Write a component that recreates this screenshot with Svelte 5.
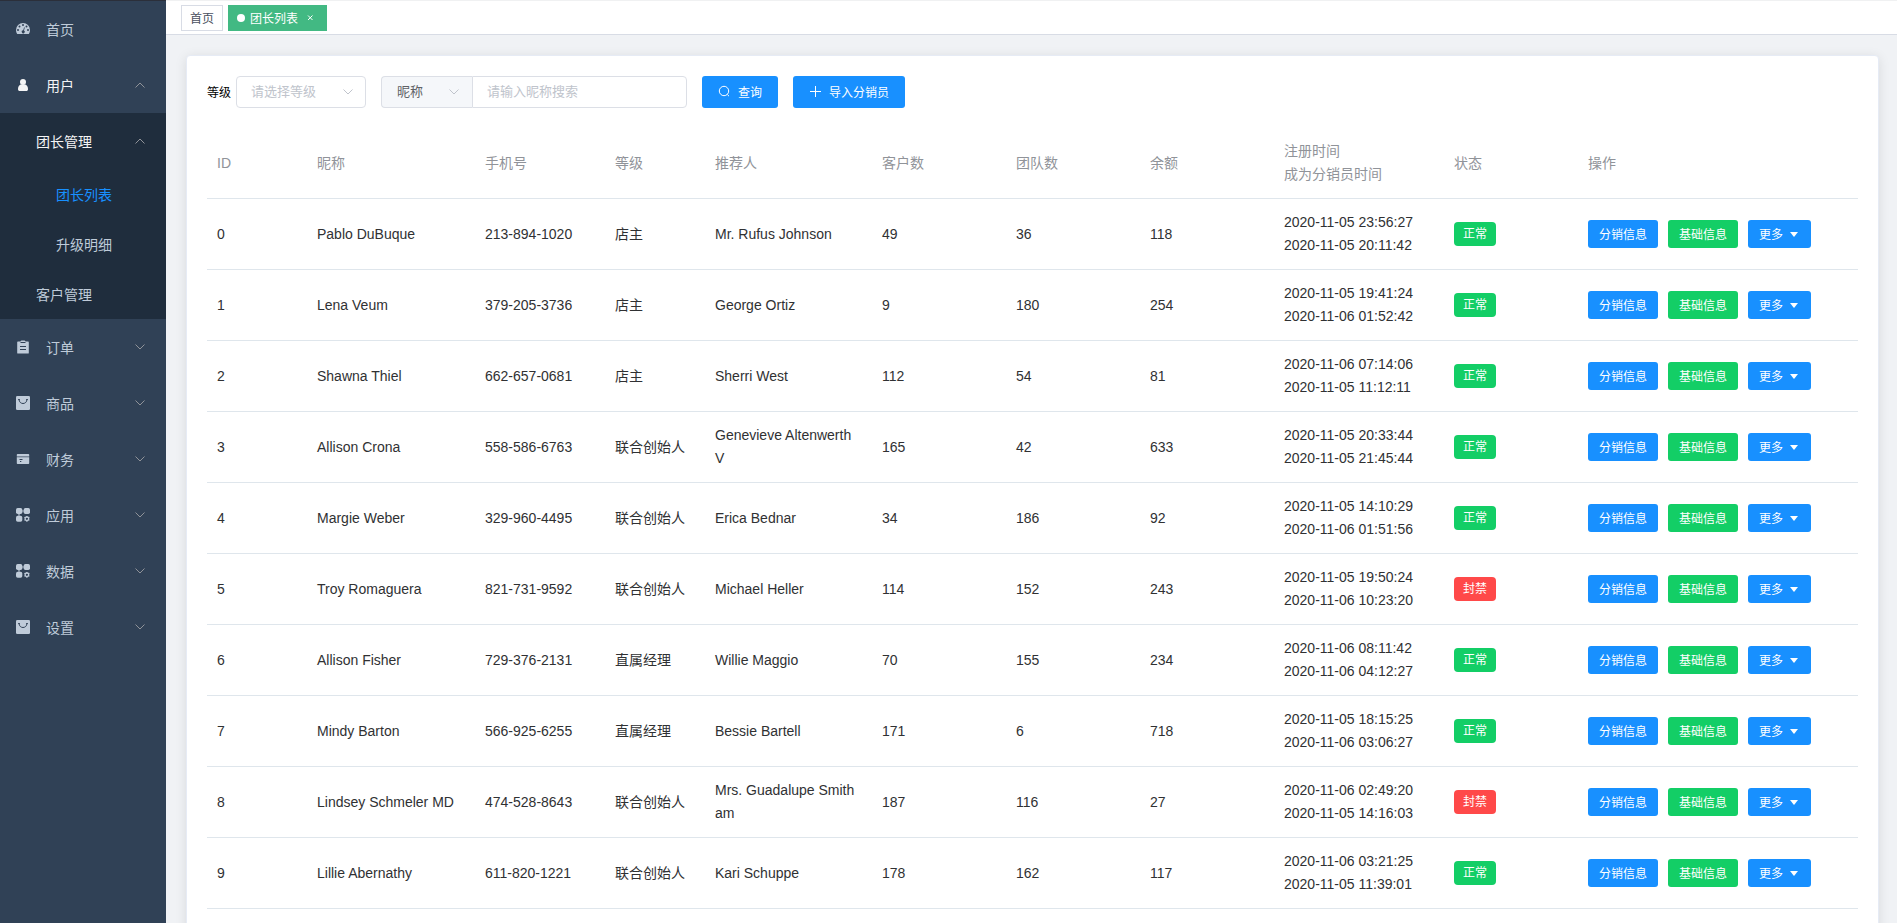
<script>
  const rest = [
    { label: '订单', icon: 'clipboard' },
    { label: '商品', icon: 'bag' },
    { label: '财务', icon: 'card' },
    { label: '应用', icon: 'grid' },
    { label: '数据', icon: 'grid' },
    { label: '设置', icon: 'bag' }
  ];

  const widths = [100, 168, 130, 100, 167, 134, 134, 134, 170, 134, 280];

  const rows = [
    ['Pablo DuBuque', '213-894-1020', '店主', 'Mr. Rufus Johnson', 49, 36, 118, '2020-11-05 23:56:27', '2020-11-05 20:11:42', true],
    ['Lena Veum', '379-205-3736', '店主', 'George Ortiz', 9, 180, 254, '2020-11-05 19:41:24', '2020-11-06 01:52:42', true],
    ['Shawna Thiel', '662-657-0681', '店主', 'Sherri West', 112, 54, 81, '2020-11-06 07:14:06', '2020-11-05 11:12:11', true],
    ['Allison Crona', '558-586-6763', '联合创始人', 'Genevieve Altenwerth V', 165, 42, 633, '2020-11-05 20:33:44', '2020-11-05 21:45:44', true],
    ['Margie Weber', '329-960-4495', '联合创始人', 'Erica Bednar', 34, 186, 92, '2020-11-05 14:10:29', '2020-11-06 01:51:56', true],
    ['Troy Romaguera', '821-731-9592', '联合创始人', 'Michael Heller', 114, 152, 243, '2020-11-05 19:50:24', '2020-11-06 10:23:20', false],
    ['Allison Fisher', '729-376-2131', '直属经理', 'Willie Maggio', 70, 155, 234, '2020-11-06 08:11:42', '2020-11-06 04:12:27', true],
    ['Mindy Barton', '566-925-6255', '直属经理', 'Bessie Bartell', 171, 6, 718, '2020-11-05 18:15:25', '2020-11-06 03:06:27', true],
    ['Lindsey Schmeler MD', '474-528-8643', '联合创始人', 'Mrs. Guadalupe Smitham', 187, 116, 27, '2020-11-06 02:49:20', '2020-11-05 14:16:03', false],
    ['Lillie Abernathy', '611-820-1221', '联合创始人', 'Kari Schuppe', 178, 162, 117, '2020-11-06 03:21:25', '2020-11-05 11:39:01', true]
  ];
</script>

{#snippet icon(name)}
  <svg class="icon" viewBox="0 0 14 14" aria-hidden="true">
    {#if name === 'dashboard'}
      <path d="M0 8a7 7 0 0 1 14 0c0 1.400-.35 2.600-1.050 3.750-.1.150-.25.250-.45.250h-11c-.2 0-.35-.1-.45-.25C.35 10.600 0 9.400 0 8z" />
      <g class="hole">
        <circle cx="2" cy="8" r="1" />
        <circle cx="3.500" cy="4.500" r="1" />
        <circle cx="7" cy="3" r="1" />
        <circle cx="10.500" cy="4.500" r="1" />
        <circle cx="12" cy="8" r="1" />
        <path d="M8.100 5.200l.7.200-.8 3.100a1.500 1.500 0 1 1-.75-.2z" />
      </g>
    {:else if name === 'user'}
      <circle cx="7" cy="4" r="3" />
      <path d="M4.500 6.500h5c1.500.8 2.500 2.500 2.500 4.500 0 1.600-.7 2-1.800 2H3.800C2.700 13 2 12.600 2 11c0-2 1-3.700 2.500-4.500z" />
    {:else if name === 'clipboard'}
      <path d="M1.900 1.400h2.600C4.700.6 5.300.4 6 .4h2c.7 0 1.300.2 1.500 1h2.600c.4 0 .7.300.7.700v10.800c0 .4-.3.700-.7.700H1.900c-.4 0-.7-.3-.7-.7V2.100c0-.4.300-.7.700-.7z" />
      <path class="line" d="M4.500 2.500h5M4 6.500h6M4 9.500h6" />
    {:else if name === 'bag'}
      <rect width="14" height="14" rx="1.300" />
      <path class="line" d="M3 3.500c.2 2.600 2 4 4 4s3.800-1.400 4-4M2.200 3.500h1.600M10.200 3.500h1.600" />
    {:else if name === 'card'}
      <path d="M1.500 2h11c.4 0 .7.300.7.700V4H.8V2.700c0-.4.300-.7.700-.7zM.8 5.200h12.400v6.100c0 .4-.3.700-.7.700h-11c-.4 0-.7-.3-.7-.7z" />
      <path class="fade" d="M.8 4h12.400v1.200H.8z" />
      <path class="line" d="M3.500 7.500h3M4 9.500h1.300" />
    {:else}
      <rect width="6.300" height="6" rx="1.700" />
      <rect x="7.700" width="6.300" height="6" rx="1.700" />
      <rect y="7.800" width="6.300" height="6" rx="1.700" />
      <path d="M6.300 2h1.400v2H6.300zM2 6h2v1.800H2z" opacity=".6" />
      <circle cx="10.900" cy="10.800" r="1.800" fill="none" stroke="currentColor" stroke-width="1.300" />
      <path d="M10.900 7.900v1M10.900 12.700v1M8.400 9.350l.9.500M12.500 11.750l.9.500M8.400 12.250l.9-.5M12.500 9.850l.9-.5" stroke="currentColor" stroke-width="1.200" />
    {/if}
  </svg>
{/snippet}

{#snippet chevron(up)}
  <svg class="chevron" class:up viewBox="0 0 12 12" aria-hidden="true"><path d="M1.500 3.500L6 8l4.500-4.500" /></svg>
{/snippet}

<div class="layout">
  <nav class="sidebar">
    <a class="item" href="#home">{@render icon('dashboard')}<span>首页</span></a>
    <button class="item open" type="button">{@render icon('user')}<span>用户</span>{@render chevron(true)}</button>
    <div class="sub">
      <button class="item open second" type="button"><span>团长管理</span>{@render chevron(true)}</button>
      <a class="item leaf third active" href="#leaders">团长列表</a>
      <a class="item leaf third" href="#upgrades">升级明细</a>
      <a class="item leaf second" href="#customers">客户管理</a>
    </div>
    {#each rest as entry}
      <button class="item" type="button">{@render icon(entry.icon)}<span>{entry.label}</span>{@render chevron(false)}</button>
    {/each}
  </nav>

  <div class="page">
    <div class="tabs">
      <a class="tab" href="#home">首页</a>
      <a class="tab current" href="#leaders">
        <i class="dot"></i>团长列表
        <svg class="close" viewBox="0 0 16 16" aria-hidden="true"><path d="M6 6.500l4.500 4.500M10.500 6.500L6 11" /></svg>
      </a>
    </div>

    <main>
      <section class="card">
        <form class="filters">
          <div class="field">
            <label for="level">等级</label>
            <div class="picker">
              <select id="level" class="empty"><option>请选择等级</option></select>
              {@render chevron(false)}
            </div>
          </div>
          <div class="group">
            <div class="picker">
              <select aria-label="搜索类型"><option>昵称</option></select>
              {@render chevron(false)}
            </div>
            <input type="text" placeholder="请输入昵称搜索" aria-label="昵称" />
          </div>
          <button class="btn" type="button">
            <svg viewBox="0 0 12 12" aria-hidden="true"><circle cx="6" cy="6" r="4.700" /><path d="M9.300 9.500l1.700 1.700" /></svg>查询
          </button>
          <button class="btn" type="button">
            <svg viewBox="0 0 12 12" aria-hidden="true"><path d="M6.500 1v11M1 6.500h11" /></svg>导入分销员
          </button>
        </form>

        <table>
          <colgroup>
            {#each widths as w}<col style:width="{w}px" />{/each}
          </colgroup>
          <thead>
            <tr>
              <th>ID</th><th>昵称</th><th>手机号</th><th>等级</th><th>推荐人</th><th>客户数</th><th>团队数</th><th>余额</th>
              <th>注册时间<br />成为分销员时间</th><th>状态</th><th>操作</th>
            </tr>
          </thead>
          <tbody>
            {#each rows as [name, phone, level, referrer, customers, team, balance, registered, joined, normal], id}
              <tr>
                <td>{id}</td>
                <td>{name}</td>
                <td>{phone}</td>
                <td>{level}</td>
                <td>{referrer}</td>
                <td>{customers}</td>
                <td>{team}</td>
                <td>{balance}</td>
                <td>{registered}<br />{joined}</td>
                <td><span class="tag" class:banned={!normal}>{normal ? '正常' : '封禁'}</span></td>
                <td>
                  <div class="actions">
                    <button class="btn mini" type="button">分销信息</button>
                    <button class="btn mini green" type="button">基础信息</button>
                    <button class="btn mini" type="button">更多<i class="caret"></i></button>
                  </div>
                </td>
              </tr>
            {/each}
          </tbody>
        </table>
      </section>
    </main>
  </div>
</div>

<style>
  * {
    box-sizing: border-box;
  }
  .layout {
    display: flex;
    height: 100vh;
    overflow: hidden;
    font-family: 'Liberation Sans', 'Noto Sans CJK SC', sans-serif;
    font-size: 14px;
    color: #303133;
  }
  button,
  input,
  select {
    font-family: inherit;
    margin: 0;
  }
  a {
    text-decoration: none;
  }

  .sidebar {
    flex: none;
    width: 166px;
    background: #304156;
    border-top: 1px solid #2b2f3a;
  }
  .item {
    display: flex;
    align-items: center;
    width: 100%;
    height: 56px;
    padding: 0 20px 0 16px;
    border: 0;
    background: none;
    color: #bfcbd9;
    font-size: 14px;
    text-align: left;
    cursor: pointer;
  }
  .item.open {
    color: #f4f4f5;
  }
  .sub {
    background: #1f2d3d;
  }
  .leaf {
    height: 50px;
  }
  .second {
    padding-left: 36px;
  }
  .third {
    padding-left: 56px;
  }
  .active {
    color: #1890ff;
  }
  .icon {
    width: 14px;
    height: 14px;
    margin-right: 16px;
    fill: currentColor;
  }
  .icon .hole {
    fill: #304156;
  }
  .icon .line {
    fill: none;
    stroke: #304156;
    stroke-width: 1;
  }
  .icon .fade {
    opacity: 0.5;
  }
  .chevron {
    width: 12px;
    height: 12px;
    fill: none;
    stroke: #909399;
    stroke-width: 1;
  }
  .chevron.up {
    transform: rotate(180deg);
  }
  .item .chevron {
    margin-left: auto;
  }

  .page {
    flex: 1;
    min-width: 0;
    display: flex;
    flex-direction: column;
    background: #f0f2f5;
  }
  .tabs {
    flex: none;
    display: flex;
    gap: 5px;
    height: 35px;
    padding: 4px 15px;
    border-top: 1px solid #f0f1f2;
    border-bottom: 1px solid #d8dce5;
    background: #fff;
  }
  .tab {
    display: flex;
    align-items: center;
    height: 26px;
    padding: 0 8px 2px;
    border: 1px solid #d8dce5;
    color: #495060;
    font-size: 12px;
  }
  .tab.current {
    border-color: #42b983;
    background: #42b983;
    color: #fff;
  }
  .dot {
    width: 8px;
    height: 8px;
    margin: 2px 5px 0 0;
    border-radius: 50%;
    background: #fff;
  }
  .close {
    width: 16px;
    height: 16px;
    margin-left: 4px;
    stroke: #fff;
    stroke-width: 1;
  }

  main {
    flex: 1;
    min-height: 0;
    padding: 20px 18px 20px 20px;
    overflow: auto;
    scrollbar-width: none;
  }
  .card {
    padding: 20px 20px 60px;
    border: 1px solid #e6ebf5;
    border-radius: 4px;
    background: #fff;
    box-shadow: 0 2px 12px rgba(0, 0, 0, 0.1);
  }
  .filters {
    display: flex;
    gap: 15px;
    margin-bottom: 20px;
  }
  .field {
    display: flex;
    align-items: center;
    gap: 5px;
    font-size: 12px;
    color: #000;
  }
  .field label {
    padding-bottom: 2px;
  }
  .picker {
    position: relative;
    width: 130px;
  }
  .picker .chevron {
    position: absolute;
    top: 10px;
    right: 12px;
    stroke: #c0c4cc;
    pointer-events: none;
  }
  select,
  input {
    width: 100%;
    height: 32px;
    padding: 0 14px 2px;
    border: 1px solid #dcdfe6;
    border-radius: 4px;
    background: #fff;
    color: #606266;
    font-size: 13px;
    appearance: none;
    outline: none;
  }
  select.empty,
  input::placeholder {
    color: #c0c4cc;
  }
  .group {
    display: flex;
    width: 306px;
  }
  .group .picker {
    flex: none;
    width: 91px;
  }
  .group select {
    padding-left: 15px;
    border-right: 0;
    border-radius: 4px 0 0 4px;
    background: #f5f7fa;
  }
  .group input {
    flex: 1;
    min-width: 0;
    border-radius: 0 4px 4px 0;
  }
  .btn {
    display: flex;
    align-items: center;
    height: 32px;
    padding: 0 16px 2px;
    border: 0;
    border-radius: 3px;
    background: #1890ff;
    color: #fff;
    font-size: 12px;
    white-space: nowrap;
    cursor: pointer;
  }
  .btn svg {
    width: 12px;
    height: 12px;
    margin-right: 8px;
    fill: none;
    stroke: #fff;
    stroke-width: 1;
  }
  .mini {
    height: 28px;
    padding: 0 11px 2px;
  }
  .green {
    background: #13ce66;
  }
  .caret {
    margin: 2px 2px 0 7px;
    border: 4px solid transparent;
    border-top: 5px solid #fff;
    border-bottom: 0;
  }

  table {
    width: 100%;
    table-layout: fixed;
    border-collapse: separate;
    border-spacing: 0;
  }
  th,
  td {
    height: 71px;
    padding: 0 10px;
    border-bottom: 1px solid #dfe6ec;
    line-height: 23px;
    text-align: left;
    vertical-align: middle;
    word-break: break-all;
  }
  th {
    color: #909399;
    font-weight: 400;
  }
  .tag {
    display: block;
    width: 42px;
    height: 24px;
    border-radius: 4px;
    background: #13ce66;
    color: #fff;
    font-size: 12px;
    line-height: 24px;
    text-align: center;
  }
  .tag.banned {
    background: #ff4949;
  }
  .actions {
    display: flex;
    gap: 10px;
  }
</style>
